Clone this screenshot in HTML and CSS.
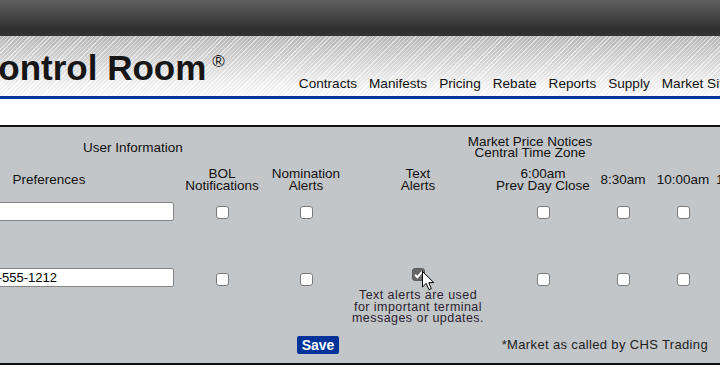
FILE: index.html
```html
<!DOCTYPE html>
<html lang="en">
<head>
    <meta charset="UTF-8">
    <meta name="viewport" content="width=device-width, initial-scale=1.0">
    <title>Control Room - Preferences</title>
    <link rel="stylesheet" href="styles.css">
</head>
<body>
    <div class="topbar"></div>

    <header class="masthead">
        <div class="brand">Control Room<sup>&reg;</sup></div>
        <nav class="mainnav">
            <a href="#">Contracts</a>
            <a href="#">Manifests</a>
            <a href="#">Pricing</a>
            <a href="#">Rebate</a>
            <a href="#">Reports</a>
            <a href="#">Supply</a>
            <a href="#">Market Sites</a>
        </nav>
    </header>

    <section class="panel">
        <div class="prefs">
            <!-- group headings -->
            <div class="group group-user">User Information</div>
            <div class="group group-market">Market Price Notices<br>Central Time Zone</div>

            <!-- column headings -->
            <div class="colhead c1">Preferences</div>
            <div class="colhead c2">BOL<br>Notifications</div>
            <div class="colhead c3">Nomination<br>Alerts</div>
            <div class="colhead c4">Text<br>Alerts</div>
            <div class="colhead c5">6:00am<br>Prev Day Close</div>
            <div class="colhead c6">8:30am</div>
            <div class="colhead c7">10:00am</div>
            <div class="colhead c8">1:30pm</div>

            <!-- email row -->
            <input class="field r1 c1" type="text" value="">
            <span class="box r1 c2"></span>
            <span class="box r1 c3"></span>
            <span class="box r1 c5"></span>
            <span class="box r1 c6"></span>
            <span class="box r1 c7"></span>
            <span class="box r1 c8"></span>

            <!-- phone row -->
            <input class="field r2 c1" type="text" value="952-555-1212">
            <span class="box r2 c2"></span>
            <span class="box r2 c3"></span>
            <span class="box checked r2t c4">
                <svg width="11" height="11" viewBox="0 0 11 11"><path d="M2 5.8 L4.4 8.2 L9 2.8" fill="none" stroke="#fff" stroke-width="2"/></svg>
                <svg class="pointer" width="13" height="20" viewBox="0 0 13 20"><path d="M0.5 0.5 L0.5 16 L4.3 12.4 L6.9 18.6 L9.3 17.6 L6.8 11.6 L11.8 11.6 Z" fill="#fff" stroke="#000" stroke-width="1"/></svg>
            </span>
            <span class="box r2 c5"></span>
            <span class="box r2 c6"></span>
            <span class="box r2 c7"></span>
            <span class="box r2 c8"></span>

            <div class="hint c4">Text alerts are used<br>for important terminal<br>messages or updates.</div>

            <div class="actions">
                <button class="save" type="button">Save</button>
                <span class="footnote">*Market as called by CHS Trading</span>
            </div>
        </div>
    </section>
</body>
</html>
```

FILE: styles.css
```css
body {
    margin: 0;
    font-family: "Liberation Sans", Arial, sans-serif;
    color: #111;
    background: #fff;
    overflow: hidden;
}
.topbar {
    height: 36px;
    background: linear-gradient(#5f5f5f, #454545 45%, #2d2d2d 85%, #363636);
}
.masthead {
    height: 60px;
    display: flex;
    align-items: flex-end;
    border-bottom: 3px solid #06349a;
    background:
        repeating-linear-gradient(135deg, rgba(255,255,255,0.45) 0 1px, rgba(0,0,0,0.03) 1px 3px),
        linear-gradient(#bcbcbc, #dedede 45%, #f6f6f6 80%, #fdfdfd);
    white-space: nowrap;
}
.brand {
    margin-left: -27px;
    margin-bottom: 8px;
    font-size: 35px;
    line-height: 40px;
    font-weight: bold;
    color: #161616;
}
.brand sup {
    font-size: 17px;
    font-weight: normal;
    margin-left: 6px;
    vertical-align: 13px;
    line-height: 0;
}
.mainnav {
    display: flex;
    gap: 12px;
    margin-left: 74px;
    padding-bottom: 4px;
}
.mainnav a {
    color: #111;
    text-decoration: none;
    font-size: 13.6px;
    line-height: 16px;
}
.panel {
    margin-top: 26px;
    height: 236px;
    background: #c3c6c8;
    border-top: 2px solid #111;
    border-bottom: 2px solid #111;
    overflow: hidden;
}
.prefs {
    margin-left: -76px;
    display: grid;
    grid-template-columns: 250px 96px 72px 152px 98px 62px 58px 52px;
    grid-template-rows: 36px 34px 69px 24px 36px 37px;
    font-size: 13.5px;
}
.group {
    grid-row: 1;
    align-self: center;
    padding-top: 4px;
    text-align: center;
}
.group-user {
    grid-column: 1 / 4;
}
.group-market {
    grid-column: 4 / 8;
    padding-left: 6px;
    line-height: 11px;
}
.colhead {
    grid-row: 2;
    align-self: center;
    text-align: center;
    line-height: 12px;
    white-space: nowrap;
}
.c1 { grid-column: 1; }
.c2 { grid-column: 2; }
.c3 { grid-column: 3; }
.c4 { grid-column: 4; }
.c5 { grid-column: 5; }
.c6 { grid-column: 6; }
.c7 { grid-column: 7; }
.c8 { grid-column: 8; }
.colhead.c8 {
    text-align: left;
    padding-left: 4px;
}
.field {
    box-sizing: border-box;
    justify-self: end;
    align-self: start;
    width: 200px;
    height: 19px;
    padding: 0 1px;
    border: 1px solid #858585;
    border-radius: 2px;
    background: #fff;
    font-family: "Liberation Sans", Arial, sans-serif;
    font-size: 13px;
    color: #000;
}
.field.r1 { grid-row: 3; margin-top: 5px; }
.field.r2 { grid-row: 4; margin-top: 2px; }
.box {
    box-sizing: border-box;
    display: block;
    width: 13px;
    height: 13px;
    justify-self: center;
    align-self: start;
    border: 1px solid #7a7a7a;
    border-radius: 3px;
    background: #fff;
}
.box.r1 { grid-row: 3; margin-top: 9px; }
.box.r2 { grid-row: 4; margin-top: 7px; }
.box.c8 { display: none; }
.box.checked {
    position: relative;
    grid-row: 4;
    margin-top: 2px;
    background: #666;
    border-color: #5a5a5a;
}
.box.checked svg {
    display: block;
    margin: 0;
}
.pointer {
    position: absolute;
    left: 9px;
    top: 2px;
}
.hint {
    grid-row: 5;
    text-align: center;
    font-size: 12.5px;
    line-height: 11.5px;
    letter-spacing: 0.45px;
    color: #2a2330;
    white-space: nowrap;
}
.actions {
    grid-row: 6;
    grid-column: 1 / 8;
    display: grid;
    grid-template-columns: 1fr auto 1fr;
    align-items: center;
}
.save {
    grid-column: 2;
    height: 18px;
    padding: 0 5px;
    border: none;
    border-radius: 2px;
    background: #00339a;
    color: #fff;
    font-family: "Liberation Sans", Arial, sans-serif;
    font-size: 14px;
    font-weight: bold;
    line-height: 18px;
}
.footnote {
    grid-column: 3;
    justify-self: end;
    padding-right: 4px;
    font-size: 13px;
    letter-spacing: 0.35px;
    color: #222;
    white-space: nowrap;
}
```
